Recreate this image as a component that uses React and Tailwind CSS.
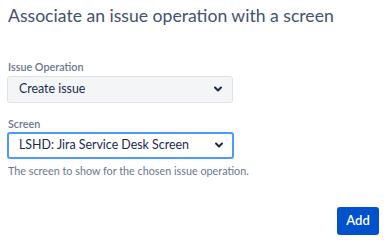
const Chevron = () => (
  <svg width="12" height="12" viewBox="0 0 24 24" className="pointer-events-none absolute right-[9px] top-1/2 -translate-y-1/2">
    <path d="M6 9l6 6 6-6" fill="none" stroke="#172b4d" strokeWidth="4" strokeLinecap="round" strokeLinejoin="round" />
  </svg>
);

const App = () => {
  return (
    <div className="w-[388px] h-[247px] bg-white px-[8px] pt-[3px] text-[#172b4d]" style={{ fontFamily: 'Lato, sans-serif' }}>
      <h2 className="whitespace-nowrap text-[17.6px] leading-[26px] text-[#42526e]">Associate an issue operation with a screen</h2>

      <form className="mt-[31px] flex flex-col">
        <label className="text-[10.8px] leading-[14px] font-semibold text-[#6b778c]">Issue Operation</label>
        <div className="relative mt-[1px] w-[226px] -ml-[1px]">
          <select className="appearance-none w-full h-[27px] rounded-[3px] border border-[#dfe1e6] bg-[#f4f5f7] pl-[11px] text-[12.4px] text-[#172b4d] outline-none">
            <option>Create issue</option>
          </select>
          <Chevron />
        </div>

        <label className="mt-[14px] text-[10.8px] leading-[14px] font-semibold text-[#6b778c]">Screen</label>
        <div className="relative w-[227px] -ml-[1px]">
          <select className="appearance-none w-full h-[27px] rounded-[3px] border-2 border-[#4c9aff] bg-white pl-[10px] text-[12.4px] text-[#172b4d] outline-none">
            <option>LSHD: Jira Service Desk Screen</option>
          </select>
          <Chevron />
        </div>
        <p className="mt-[5px] text-[10.8px] leading-[14px] text-[#6b778c]">The screen to show for the chosen issue operation.</p>

        <div className="flex justify-end mt-[29px] pr-[1px]">
          <button type="button" className="h-[28px] w-[42px] rounded-[3px] bg-[#0052cc] text-white text-[13px] font-semibold">Add</button>
        </div>
      </form>
    </div>
  );
};

export default App;
